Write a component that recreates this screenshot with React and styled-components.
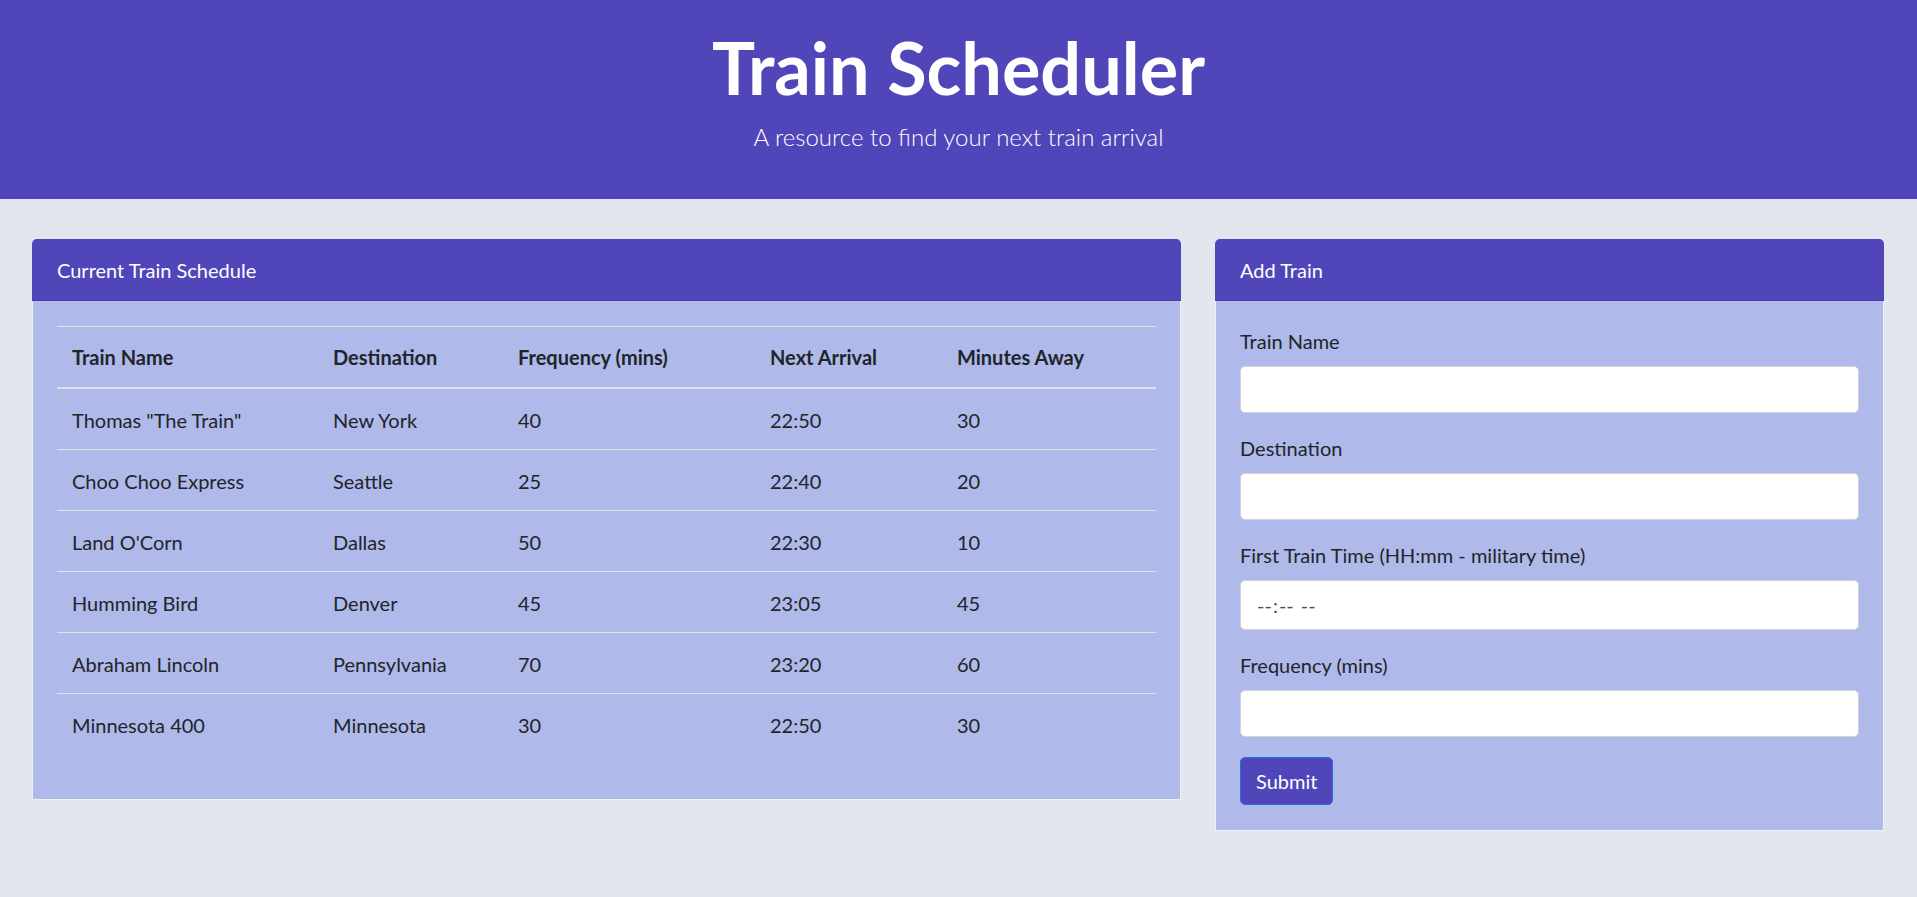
import React from 'react';
import styled, { createGlobalStyle } from 'styled-components';

const GlobalStyle = createGlobalStyle`
    html, body {
        margin: 0;
        padding: 0;
    }
    body {
        background: #e3e6ef;
        font-family: Lato, "Open Sans", sans-serif;
        font-size: 20px;
        line-height: 1.5;
        color: #212529;
    }
`;

const Page = styled.div`
    min-height: 897px;
    background: #e3e6ef;
`;

const Banner = styled.header`
    background: #5046b9;
    color: #fff;
    text-align: center;
    padding: 24px 0 44px;
`;

const Title = styled.h1`
    margin: 0;
    font-size: 72px;
    font-weight: 700;
    line-height: 1.2;
`;

const Lead = styled.p`
    margin: 9px 0 0;
    font-size: 24px;
    font-weight: 300;
    line-height: 1.5;
`;

const Columns = styled.main`
    display: grid;
    grid-template-columns: minmax(0, 1149fr) minmax(0, 669fr);
    column-gap: 34px;
    align-items: start;
    padding: 40px 33px 0 32px;
`;

const Card = styled.section`
    background: #afb9ea;
    border: 1px solid #eef0f7;
    border-top: none;
    border-radius: 5px 5px 0 0;
`;

const CardHeader = styled.div`
    background: #5046b9;
    color: #fff;
    padding: 16px 24px 15px 25px;
    line-height: 30px;
    border-bottom: 1px solid #463ea6;
    border-radius: 5px 5px 0 0;
    margin: 0 -1px;
`;

const CardBody = styled.div`
    padding: 25px 24px;
`;

const Table = styled.table`
    width: 100%;
    border-collapse: collapse;
    table-layout: fixed;
    margin-bottom: 20px;
`;

const HeadCell = styled.th`
    box-sizing: border-box;
    width: ${props => props.width}px;
    text-align: left;
    font-weight: 700;
    padding: 15px;
    line-height: 30px;
    border-top: 1px solid #dee2e6;
    border-bottom: 2px solid #dee2e6;
`;

const Cell = styled.td`
    padding: 16px 15px 14px;
    line-height: 30px;
    border-top: 1px solid #dee2e6;
    white-space: nowrap;
`;

const FormGroup = styled.div`
    margin-bottom: 20px;
`;

const Label = styled.label`
    display: block;
    margin-bottom: 10px;
    line-height: 30px;
`;

const Input = styled.input`
    display: block;
    box-sizing: border-box;
    width: 100%;
    height: ${props => (props.type === 'time' ? 50 : 47)}px;
    padding: 7px 15px;
    font-family: inherit;
    font-size: 20px;
    color: #495057;
    background: #fff;
    border: 1px solid #ced4da;
    border-radius: 5px;
    outline: none;

    &::-webkit-calendar-picker-indicator {
        display: none;
    }
`;

const SubmitButton = styled.button`
    font-family: inherit;
    font-size: 20px;
    line-height: 30px;
    color: #fff;
    background: #5046b9;
    border: 1px solid #1f6fe5;
    border-radius: 5px;
    padding: 8px 15px;
    cursor: pointer;
`;

const columns = [
    { label: 'Train Name', width: 261 },
    { label: 'Destination', width: 185 },
    { label: 'Frequency (mins)', width: 252 },
    { label: 'Next Arrival', width: 187 },
    { label: 'Minutes Away', width: 214 }
];

const trains = [
    ['Thomas "The Train"', 'New York', '40', '22:50', '30'],
    ['Choo Choo Express', 'Seattle', '25', '22:40', '20'],
    ["Land O'Corn", 'Dallas', '50', '22:30', '10'],
    ['Humming Bird', 'Denver', '45', '23:05', '45'],
    ['Abraham Lincoln', 'Pennsylvania', '70', '23:20', '60'],
    ['Minnesota 400', 'Minnesota', '30', '22:50', '30']
];

const fields = [
    { id: 'train-name', label: 'Train Name', type: 'text' },
    { id: 'destination', label: 'Destination', type: 'text' },
    { id: 'first-train', label: 'First Train Time (HH:mm - military time)', type: 'time' },
    { id: 'frequency', label: 'Frequency (mins)', type: 'number' }
];

const App = () => {
    return (
        <Page>
            <GlobalStyle />
            <Banner>
                <Title>Train Scheduler</Title>
                <Lead>A resource to find your next train arrival</Lead>
            </Banner>
            <Columns>
                <Card>
                    <CardHeader>Current Train Schedule</CardHeader>
                    <CardBody>
                        <Table>
                            <thead>
                                <tr>
                                    {columns.map(col => (
                                        <HeadCell key={col.label} width={col.width}>
                                            {col.label}
                                        </HeadCell>
                                    ))}
                                </tr>
                            </thead>
                            <tbody>
                                {trains.map(row => (
                                    <tr key={row[0]}>
                                        {row.map((value, i) => (
                                            <Cell key={i}>{value}</Cell>
                                        ))}
                                    </tr>
                                ))}
                            </tbody>
                        </Table>
                    </CardBody>
                </Card>
                <Card>
                    <CardHeader>Add Train</CardHeader>
                    <CardBody>
                        <form onSubmit={e => e.preventDefault()}>
                            {fields.map(field => (
                                <FormGroup key={field.id}>
                                    <Label htmlFor={field.id}>{field.label}</Label>
                                    <Input id={field.id} type={field.type} />
                                </FormGroup>
                            ))}
                            <SubmitButton type="submit">Submit</SubmitButton>
                        </form>
                    </CardBody>
                </Card>
            </Columns>
        </Page>
    );
};

export default App;
